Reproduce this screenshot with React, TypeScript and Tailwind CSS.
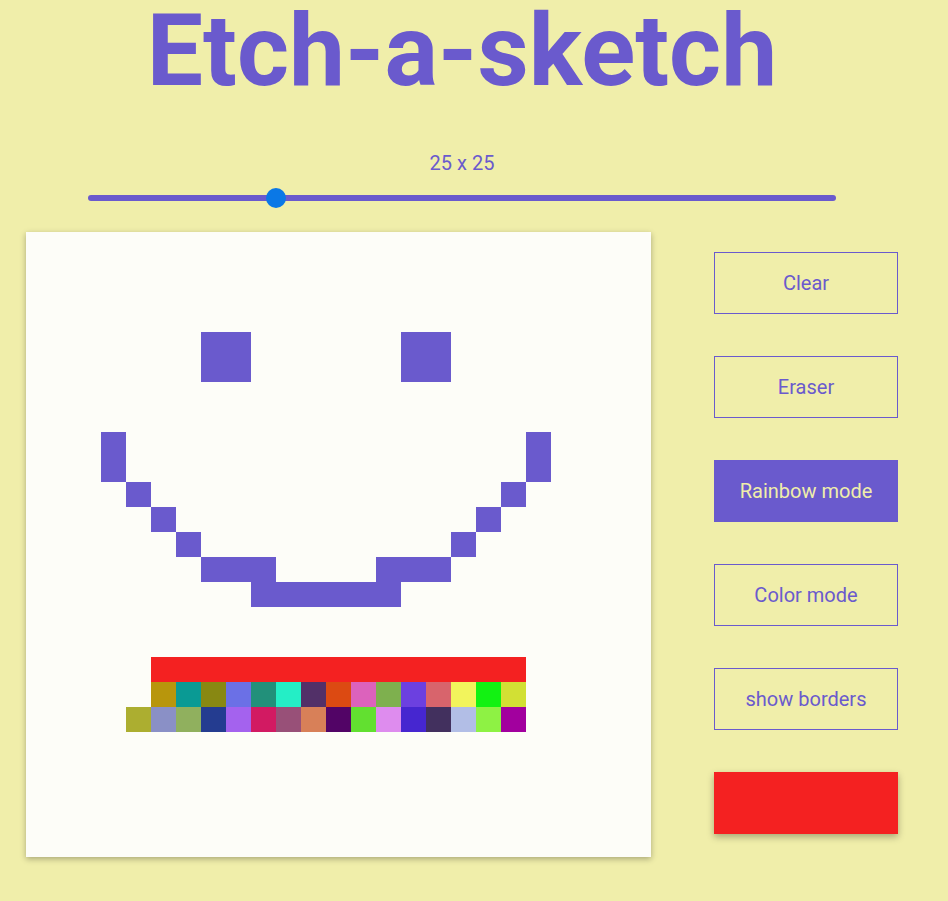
import React from 'react'

const INK = '#6a5acd'
const RED = '#f42121'

// painted cells, keyed "row-col"
const painted: Record<string, string> = {}

const fill = (r: number, cols: number[], color = INK) => {
  cols.forEach((c) => { painted[`${r}-${c}`] = color })
}

// eyes
fill(4, [7, 8, 15, 16])
fill(5, [7, 8, 15, 16])
// smile
fill(8, [3, 20])
fill(9, [3, 20])
fill(10, [4, 19])
fill(11, [5, 18])
fill(12, [6, 17])
fill(13, [7, 8, 9, 14, 15, 16])
fill(14, [9, 10, 11, 12, 13, 14])

// rainbow scribble
fill(17, [5, 6, 7, 8, 9, 10, 11, 12, 13, 14, 15, 16, 17, 18, 19], RED)
const row18 = ['#b8960c', '#0a9a94', '#888812', '#6b70e6', '#22907a', '#24eec6', '#523068', '#dc4a12', '#dc62bc', '#7eb04e', '#6c40e0', '#d8646c', '#f2f45c', '#12f212', '#d2e034']
row18.forEach((c, i) => { painted[`18-${i + 5}`] = c })
const row19 = ['#acae30', '#8a90c6', '#90b05e', '#243c90', '#a462ee', '#d21a62', '#985078', '#d88058', '#520466', '#62e030', '#de8cee', '#4626d0', '#42305e', '#b2bee6', '#8ef244', '#a2009e']
row19.forEach((c, i) => { painted[`19-${i + 4}`] = c })

const SIZE = 25

const BUTTONS = [
  { label: 'Clear', active: false },
  { label: 'Eraser', active: false },
  { label: 'Rainbow mode', active: true },
  { label: 'Color mode', active: false },
  { label: 'show borders', active: false },
]

export default function App() {
  const cells = []
  for (let r = 0; r < SIZE; r++) {
    for (let c = 0; c < SIZE; c++) {
      const color = painted[`${r}-${c}`]
      cells.push(
        <div key={`${r}-${c}`} className="w-[25px] h-[25px]" style={color ? { backgroundColor: color } : undefined} />
      )
    }
  }

  return (
    <div className="min-h-screen w-full bg-[#f0eeaa] font-['Roboto',sans-serif] text-[#6a5acd]">
      <div className="w-[924px] flex flex-col items-center">
        {/* Title */}
        <h1 className="pt-px text-[100px] leading-[100px] font-bold">Etch-a-sketch</h1>

        {/* Grid size */}
        <p className="mt-[50px] text-[20px] leading-[24px]">25 x 25</p>

        {/* Slider */}
        <div className="relative mt-[13px] w-[748px] h-[20px] flex items-center">
          <div className="w-full h-[6px] rounded-full bg-[#6a5acd]" />
          <div className="absolute left-[178px] top-0 w-[20px] h-[20px] rounded-full bg-[#0a78e6]" />
        </div>

        {/* Board + controls */}
        <div className="mt-[24px] flex items-start gap-[63px]">
          <div className="w-[625px] h-[625px] bg-[#fdfdf8] shadow-[0_2px_6px_rgba(0,0,0,0.3)] grid grid-cols-[repeat(25,25px)]">
            {cells}
          </div>

          <div className="mt-[20px] flex flex-col gap-[42px]">
            {BUTTONS.map(({ label, active }) => (
              <button
                key={label}
                className={`w-[184px] h-[62px] text-[20px] border border-[#6a5acd] ${
                  active ? 'bg-[#6a5acd] text-[#f0eeaa]' : 'bg-transparent text-[#6a5acd]'
                }`}
              >
                {label}
              </button>
            ))}
            <div className="w-[184px] h-[62px] bg-[#f42121] shadow-[0_3px_7px_rgba(0,0,0,0.3)]" />
          </div>
        </div>
      </div>
    </div>
  )
}
